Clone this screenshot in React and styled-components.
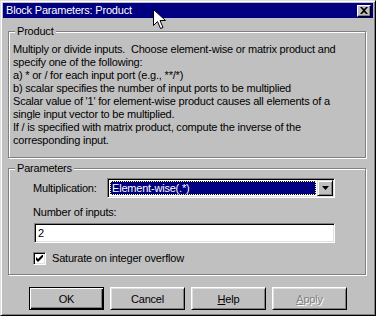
import React from 'react'
import styled, { createGlobalStyle } from 'styled-components'

const GlobalStyle = createGlobalStyle`
  html, body {
    margin: 0;
    padding: 0;
    background: #c0c0c0;
  }
  body {
    font-family: "Liberation Sans", Arial, sans-serif;
    font-size: 11px;
    letter-spacing: -0.2px;
    color: #000;
  }
`

const Window = styled.div`
  position: relative;
  box-sizing: border-box;
  width: 376px;
  height: 316px;
  background: #c0c0c0;
  border: 1px solid;
  border-color: #dfdfdf #000 #000 #dfdfdf;
  box-shadow: inset 1px 1px #fff, inset -1px -1px #808080;
  padding: 2px;
  display: flex;
  flex-direction: column;
`

const TitleBar = styled.div`
  height: 15px;
  background: #000080;
  color: #fff;
  display: flex;
  align-items: center;
  justify-content: space-between;
  padding: 0 2px 0 3px;
`

const TitleText = styled.span`
  line-height: 13px;
`

const CloseButton = styled.div`
  box-sizing: border-box;
  width: 14px;
  height: 12px;
  background: #c0c0c0;
  border: 1px solid;
  border-color: #fff #000 #000 #fff;
  box-shadow: inset -1px -1px #808080;
  display: flex;
  align-items: center;
  justify-content: center;
`

const Group = styled.fieldset`
  box-sizing: border-box;
  width: 358px;
  margin: ${p => p.$top}px 0 0 5px;
  padding: ${p => p.$pad};
  border: 1px solid #808080;
  box-shadow: inset 1px 1px #fff, 1px 1px #fff;
  min-width: 0;
`

const Legend = styled.legend`
  margin-left: ${p => p.$offset || 2}px;
  padding: 0 2px;
  line-height: 13px;
  background: #c0c0c0;
`

const Description = styled.div`
  line-height: 13px;
  white-space: pre;
`

const Row = styled.div`
  display: flex;
  align-items: center;
  margin-top: ${p => p.$top || 0}px;
  padding-left: ${p => p.$indent || 0}px;
  line-height: 13px;
`

const FieldLabel = styled.span`
  width: ${p => (p.$width ? `${p.$width}px` : 'auto')};
`

const Sunken = styled.div`
  box-sizing: border-box;
  height: 20px;
  width: ${p => p.$width}px;
  background: #fff;
  border: 1px solid;
  border-color: #808080 #fff #fff #808080;
  box-shadow: inset 1px 1px #000, inset -1px -1px #dfdfdf;
  padding: 1px;
  display: flex;
  align-items: stretch;
`

const SelectedValue = styled.div`
  flex: 1;
  margin: 1px;
  background: #000080;
  color: #fff;
  border: 1px dotted #ffff66;
  padding-left: 1px;
  display: flex;
  align-items: center;
`

const DropButton = styled.div`
  box-sizing: border-box;
  width: 16px;
  background: #c0c0c0;
  border: 1px solid;
  border-color: #dfdfdf #000 #000 #dfdfdf;
  box-shadow: inset 1px 1px #fff, inset -1px -1px #808080;
  display: flex;
  align-items: center;
  justify-content: center;
`

const InputText = styled.span`
  padding-left: 2px;
  display: flex;
  align-items: center;
`

const CheckBox = styled.div`
  box-sizing: border-box;
  width: 13px;
  height: 13px;
  background: #fff;
  border: 1px solid;
  border-color: #808080 #fff #fff #808080;
  box-shadow: inset 1px 1px #000, inset -1px -1px #dfdfdf;
  display: flex;
  align-items: center;
  justify-content: center;
  margin-right: 6px;
`

const ButtonRow = styled.div`
  display: flex;
  justify-content: center;
  gap: 6px;
  margin-top: 12px;
`

const Button = styled.div`
  box-sizing: border-box;
  width: 75px;
  height: 23px;
  background: #c0c0c0;
  display: flex;
  align-items: center;
  justify-content: center;
  border: 1px solid;
  border-color: ${p => (p.$default ? '#000' : '#fff #000 #000 #fff')};
  box-shadow: ${p =>
    p.$default
      ? 'inset 1px 1px #fff, inset -1px -1px #000, inset -2px -2px #808080'
      : 'inset 1px 1px #dfdfdf, inset -1px -1px #808080'};
  color: ${p => (p.$disabled ? '#808080' : '#000')};
  text-shadow: ${p => (p.$disabled ? '1px 1px #fff' : 'none')};
`

const Cursor = styled.svg`
  position: absolute;
  left: 152px;
  top: 8px;
`

const descriptionLines = [
  'Multiply or divide inputs.  Choose element-wise or matrix product and',
  'specify one of the following:',
  'a) * or / for each input port (e.g., **/*)',
  'b) scalar specifies the number of input ports to be multiplied',
  "Scalar value of '1' for element-wise product causes all elements of a",
  'single input vector to be multiplied.',
  'If / is specified with matrix product, compute the inverse of the',
  'corresponding input.',
]

const App = () => {
  return (
    <>
      <GlobalStyle />
      <Window>
        <TitleBar>
          <TitleText>Block Parameters: Product</TitleText>
          <CloseButton>
            <svg width='8' height='7' viewBox='0 0 8 7'>
              <path d='M0 0h2l2 2 2-2h2L5 3.5 8 7H6L4 5 2 7H0l3-3.5z' fill='#000' />
            </svg>
          </CloseButton>
        </TitleBar>

        <Group $top={7} $pad='5px 4px 10px 4px'>
          <Legend>Product</Legend>
          <Description>{descriptionLines.join('\n')}</Description>
        </Group>

        <Group $top={4} $pad='3px 4px 9px 24px'>
          <Legend $offset={-18}>Parameters</Legend>
          <Row>
            <FieldLabel $width={74}>Multiplication:</FieldLabel>
            <Sunken $width={228}>
              <SelectedValue>Element-wise(.*)</SelectedValue>
              <DropButton>
                <svg width='7' height='4' viewBox='0 0 7 4'>
                  <path d='M0 0h7L3.5 4z' fill='#000' />
                </svg>
              </DropButton>
            </Sunken>
          </Row>
          <Row $top={8}>
            <FieldLabel>Number of inputs:</FieldLabel>
          </Row>
          <Row $top={4} $indent={1}>
            <Sunken $width={301}>
              <InputText>2</InputText>
            </Sunken>
          </Row>
          <Row $top={9}>
            <CheckBox>
              <svg width='7' height='7' viewBox='0 0 7 7'>
                <path d='M0 2l2 2 5-5v3L2 7 0 5z' fill='#000' />
              </svg>
            </CheckBox>
            <span>Saturate on integer overflow</span>
          </Row>
        </Group>

        <ButtonRow>
          <Button $default>OK</Button>
          <Button>Cancel</Button>
          <Button><span><u>H</u>elp</span></Button>
          <Button $disabled><span><u>A</u>pply</span></Button>
        </ButtonRow>

        <Cursor width='13' height='21' viewBox='0 0 13 21'>
          <path
            d='M0.5 0.5v16l4-4 3 7 2.5-1-3-7h5.5z'
            fill='#fff'
            stroke='#000'
            strokeWidth='1'
            strokeLinejoin='miter'
          />
        </Cursor>
      </Window>
    </>
  )
}

export default App
